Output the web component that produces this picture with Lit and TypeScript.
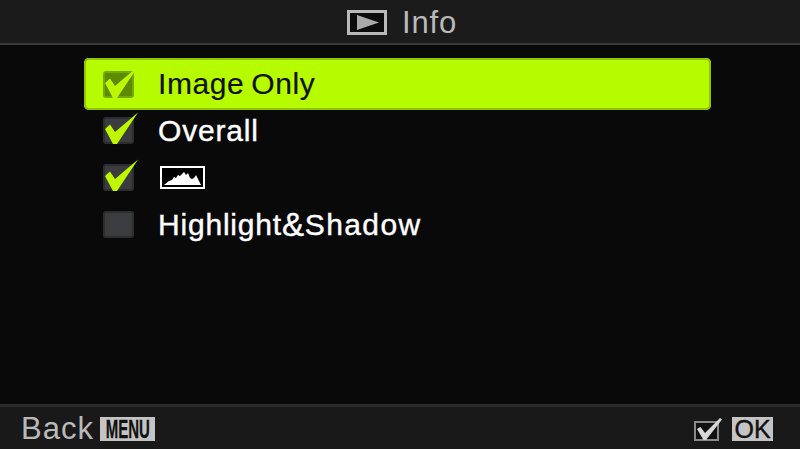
import { LitElement, html, css, svg } from 'lit';
import { customElement } from 'lit/decorators.js';

const check = svg`<svg class="box-svg" viewBox="0 0 31 27" width="31" height="27">
	<path d="M2 12 L7 7.5 L12 15 L35 -4.5 L14 27 L10 27 Z" />
</svg>`;

@customElement('app-root')
export class AppRoot extends LitElement {
	static styles = css`
		:host {
			display: flex;
			flex-direction: column;
			width: 800px;
			height: 449px;
			background: #090909;
			font-family: 'Liberation Sans', sans-serif;
			overflow: hidden;
		}
		* {
			box-sizing: border-box;
		}
		.header {
			height: 45px;
			flex: none;
			background: #1b1b1b;
			border-bottom: 2px solid #3a3a3a;
			display: flex;
			align-items: center;
			justify-content: center;
			gap: 15px;
			padding: 2px 0 0 4px;
			color: #b9b9b9;
			font-size: 31px;
			letter-spacing: 0.8px;
		}
		.header svg {
			display: block;
		}
		.list {
			flex: 1;
			padding: 13px 0 0 84px;
			display: flex;
			flex-direction: column;
		}
		.row {
			height: 47px;
			width: 627px;
			display: flex;
			align-items: center;
			color: #fff;
			font-size: 30px;
			letter-spacing: 0.8px;
			padding-left: 19px;
			-webkit-text-stroke: 0.4px currentColor;
		}
		.row.selected {
			height: 52px;
			margin-bottom: -3px;
			color: #111;
			letter-spacing: 0.6px;
			word-spacing: -2px;
			background: #b7fb00;
			border-radius: 5px;
			box-shadow: inset 0 0 0 2px #8fc400;
			-webkit-text-stroke: 0.2px currentColor;
		}
		.amp {
			font-size: 33px;
		}
		.shadow {
			letter-spacing: 1.4px;
		}
		.box {
			position: relative;
			width: 31px;
			height: 27px;
			flex: none;
			margin-right: 24px;
			background: #3a3c3f;
			border: 2px solid #2b2d2f;
			border-radius: 3px;
		}
		.selected .box {
			background: #5d8a00;
			border-color: #76a800;
		}
		.box-svg {
			position: absolute;
			left: -2px;
			top: -2px;
			overflow: visible;
			fill: #bdf802;
		}
		.hist {
			display: block;
			margin-left: 2px;
		}
		.footer {
			height: 45px;
			flex: none;
			background: #191919;
			border-top: 3px solid #2a2a2a;
			display: flex;
			align-items: center;
			padding: 2px 27px 0 21px;
			color: #b9b9b9;
			font-size: 31px;
		}
		.back {
			letter-spacing: 1px;
			margin-right: 6px;
		}
		.key {
			background: #c4c4c4;
			color: #111;
			display: flex;
			align-items: center;
			justify-content: center;
			height: 24px;
		}
		.key.menu {
			width: 55px;
			font-size: 25px;
			font-weight: bold;
		}
		.key.menu span {
			display: block;
			transform: scaleX(0.6);
			-webkit-text-stroke: 0.3px #111;
		}
		.key.ok {
			width: 41px;
			font-size: 25px;
			-webkit-text-stroke: 0.4px #111;
		}
		.spacer {
			flex: 1;
		}
		.ok-check {
			display: block;
			margin-right: 10px;
		}
	`;

	render() {
		return html`
			<div class="header">
				<svg width="40" height="25" viewBox="0 0 40 25">
					<rect x="1.5" y="1.5" width="37" height="22" fill="#0c0c0c" stroke="#b9b9b9" stroke-width="3" />
					<path d="M10 5 L10 20 L32 12.5 Z" fill="#aaa" />
				</svg>
				<span>Info</span>
			</div>
			<div class="list">
				<div class="row selected">
					<div class="box">${check}</div>
					Image Only
				</div>
				<div class="row">
					<div class="box">${check}</div>
					Overall
				</div>
				<div class="row">
					<div class="box">${check}</div>
					<svg class="hist" width="45" height="23" viewBox="0 0 45 23">
						<rect x="1" y="1" width="43" height="21" fill="#000" stroke="#fff" stroke-width="2" />
						<path
							d="M4 19 L9 15 L12 14 L14 11 L16 12 L18 9 L20 10 L22 8 L24 6 L26 9 L28 7 L30 12 L32 13 L34 12 L36 9 L38 13 L41 19 Z"
							fill="#fff"
						/>
					</svg>
				</div>
				<div class="row">
					<div class="box"></div>
					Highlight<span class="amp">&amp;</span><span class="shadow">Shadow</span>
				</div>
			</div>
			<div class="footer">
				<span class="back">Back</span>
				<div class="key menu"><span>MENU</span></div>
				<div class="spacer"></div>
				<svg class="ok-check" width="28" height="23" viewBox="0 0 28 23">
					<rect x="1" y="4" width="23" height="18" fill="#111" stroke="#8a8a8a" stroke-width="2" />
					<path d="M3 11 L6.5 9 L11 15 L26 0 L28 1.5 L12 22 L9.5 22 Z" fill="#d8d8d8" />
				</svg>
				<div class="key ok">OK</div>
			</div>
		`;
	}
}
